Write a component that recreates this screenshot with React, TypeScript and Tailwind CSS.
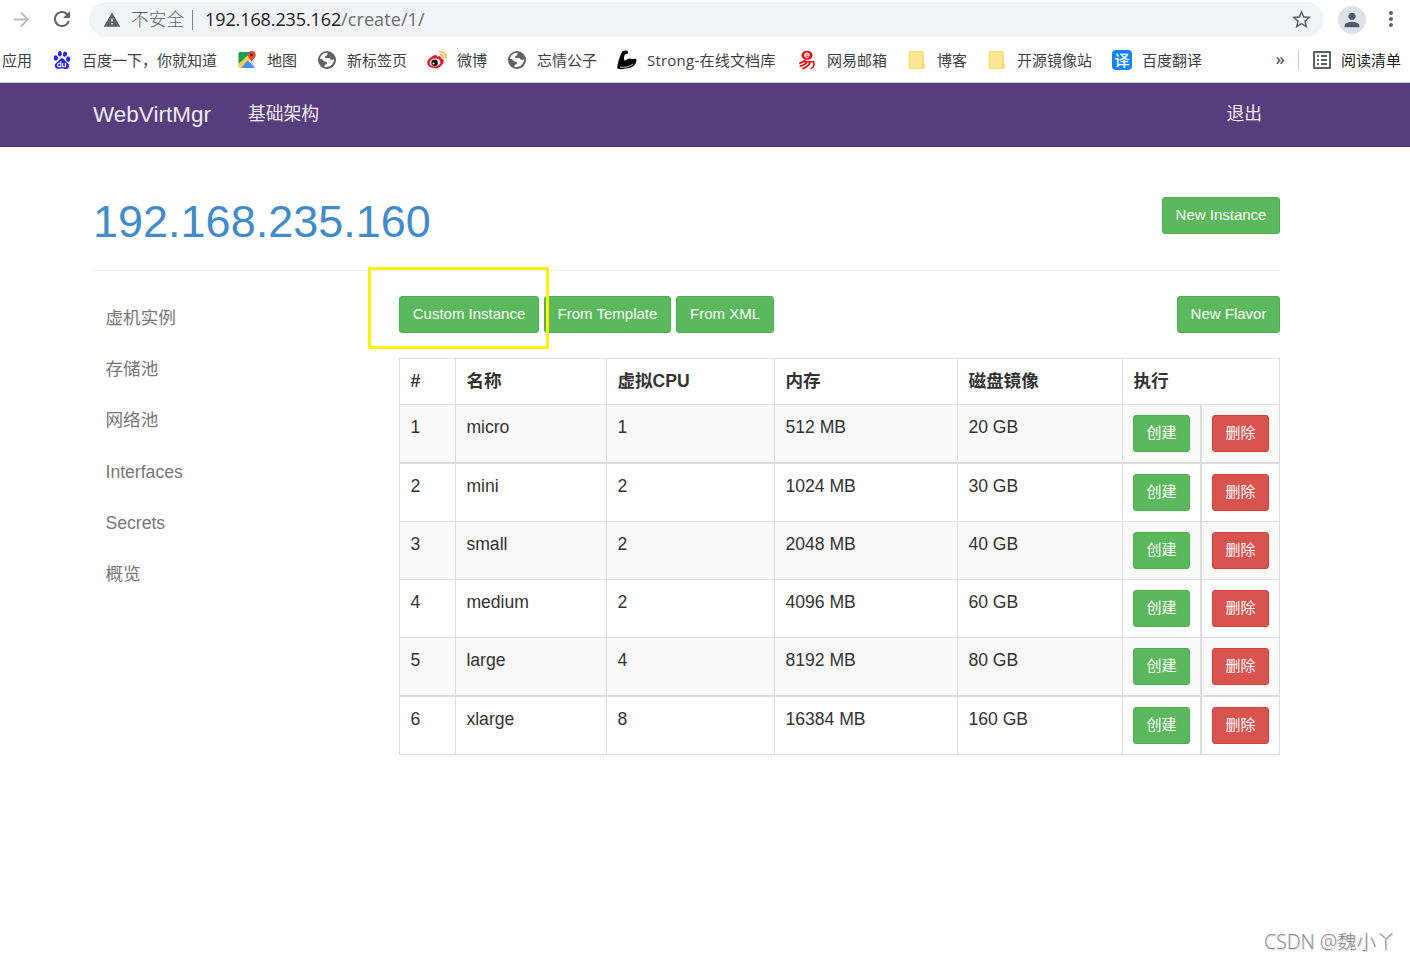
import React from "react";
import {
  MdArrowForward,
  MdRefresh,
  MdWarning,
  MdStarBorder,
  MdPerson,
  MdMoreVert,
  MdListAlt,
} from "react-icons/md";
import { SiBaidu } from "react-icons/si";

const MapIcon = () => (
  <svg viewBox="0 0 20 20" className="h-5 w-5">
    <rect x="1.5" y="2" width="16" height="16" rx="1.5" fill="#e8e8e8" />
    <path d="M3 2H14L3 14.500L1.500 13V3.500Q1.500 2 3 2Z" fill="#1a9f55" />
    <path d="M1.500 14L14.500 2H17.500V5L4 18H3L1.500 16.500Z" fill="#fbd04c" />
    <path d="M10.500 10.500L17.500 17V18H4Z" fill="#4b8df8" />
    <path d="M17.500 7V17L12 10.500Z" fill="#ddd" />
    <path d="M14.700 1a4 4 0 0 1 4 4c0 2.800-3.200 4-4 7.200C14 9 10.700 7.800 10.700 5a4 4 0 0 1 4-4Z" fill="#e2453a" />
    <circle cx="14.700" cy="4.800" r="1.400" fill="#76231d" />
  </svg>
);

const GlobeIcon = () => (
  <svg viewBox="0 0 20 20" className="h-5 w-5">
    <circle cx="10" cy="10" r="9" fill="#5f6368" />
    <path
      d="M10.800 2.800c-.8 1.100-.2 1.900-1 2.700-1.300.3-1.900 1.200-1.700 2.400h3.700c1.700 0 1.200 1.500 2.200 1.900 1.100.4 2.100-.2 3.100-.8.100 3.300-2.200 6.500-5.100 7.600-1.500.5-3.200.6-4.800.1.300-1 .7-1.900 1.500-2.200 1.100-.3 1.500-1 1.200-2-.5-1-1.500-.9-2.400-1.100-1.300-.4-1.300-1.800-2.400-2.200-.6-.2-1.400-.2-2.100-.1C3.100 5.600 6.600 2.500 10.800 2.800Z"
      fill="#fff"
    />
  </svg>
);

const WeiboIcon = () => (
  <svg viewBox="0 0 20 20" className="h-5 w-5">
    <path
      d="M7.500 5.300c1.500-.6 2.800-.2 2.500 1.500 1.800-.7 4.300-.8 4 1.400 1.800.5 3 1.600 2.800 3.300-.3 3-4.200 6.800-8.500 6.800-4.500 0-8.100-2.200-8.100-5.700 0-2.600 4.200-6.400 7.300-7.300Z"
      fill="#e6162d"
    />
    <ellipse cx="8" cy="12.500" rx="5.400" ry="4" fill="#fff" transform="rotate(-8 8 12.500)" />
    <circle cx="7.600" cy="12.700" r="3.300" fill="#17110e" />
    <circle cx="6.500" cy="13.600" r="1" fill="#fff" />
    <path d="M12.700 1.900c3.800-.7 7 2.200 6 6.300M13.200 4.800c2-.4 3.300.9 2.800 2.800" fill="none" stroke="#f9a21a" strokeWidth="1.300" strokeLinecap="round" />
  </svg>
);

const BicepIcon = () => (
  <svg viewBox="0 0 20 20" className="h-5 w-5">
    <path
      d="M5.500 1.300C7 .4 9 .4 10.300 1c.9.600 1 1.800.3 2.700L7.800 4.600 6.800 7.800l.9 3.300c1.500-1.500 3.500-2.500 5-2.500l2.300.5 4.300-.3c.5 2.500-.5 5.200-2.300 7-2.300 1.700-5.500 2.400-8.500 2.800-2.800.8-5.700.8-8 .2L.2 17.500c.3-2.500 1-6.500 2.300-9.500C3.500 5.500 4.200 2.800 5.500 1.300Z"
      fill="#050505"
    />
    <path d="M3 17.200c4.500.7 9.500-.4 13-3.200" fill="none" stroke="#fff" strokeWidth="0.800" />
  </svg>
);

const NeteaseIcon = () => (
  <svg viewBox="0 0 20 20" className="h-5 w-5">
    <ellipse cx="10" cy="5.200" rx="5.500" ry="4.500" fill="#f6050b" />
    <path d="M7.800 5.200h4.300c0-2.700-4.200-2.700-4.400.1 0 2.200 2.900 2.500 4.300 1.300" fill="none" stroke="#fff" strokeWidth="1.200" />
    <path
      d="M8.200 9.800C6.800 11.700 4.500 13 2.200 13.500M5.800 11.800H16.500C17.500 14.300 17 18.300 13.500 18.700M9.700 12.500C8 14.700 5 15.800 2.700 16.200M13.200 12.500C11.300 15.900 8 18 5.200 18.800"
      fill="none"
      stroke="#f6050b"
      strokeWidth="1.600"
    />
  </svg>
);

const FolderIcon = () => (
  <svg viewBox="0 0 20 20" className="h-5 w-5">
    <path d="M3 1.500H15Q16.200 1.500 16.200 2.700V13.200L17.300 14.200V17Q17.300 18.500 16 18.500H3Q2 18.500 2 17.500V2.500Q2 1.500 3 1.500Z" fill="#ffe594" stroke="#f5d672" />
    <path d="M16.200 13.200 14 14.500V18.300H16Q17.300 18.300 17.300 17V14.200Z" fill="#f5d672" />
  </svg>
);

const TranslateIcon = () => (
  <span className="flex h-5 w-5 items-center justify-center rounded-[4px] bg-[#1484f8] text-[15px] leading-5 font-medium text-white">译</span>
);

const bookmarks: { icon: React.ReactNode; label: string; width: string }[] = [
  { icon: <SiBaidu className="h-[18px] w-[18px] text-[#2529dc]" />, label: "百度一下，你就知道", width: "w-[135px]" },
  { icon: <MapIcon />, label: "地图", width: "w-[30px]" },
  { icon: <GlobeIcon />, label: "新标签页", width: "w-[60px]" },
  { icon: <WeiboIcon />, label: "微博", width: "w-[30px]" },
  { icon: <GlobeIcon />, label: "忘情公子", width: "w-[60px]" },
  { icon: <BicepIcon />, label: "Strong-在线文档库", width: "w-[130px] tracking-[0.220px]" },
  { icon: <NeteaseIcon />, label: "网易邮箱", width: "w-[60px]" },
  { icon: <FolderIcon />, label: "博客", width: "w-[30px]" },
  { icon: <FolderIcon />, label: "开源镜像站", width: "w-[75px]" },
  { icon: <TranslateIcon />, label: "百度翻译", width: "w-[60px]" },
];

const flavors = [
  { id: 1, name: "micro", cpu: 1, memory: "512 MB", disk: "20 GB", row: "h-[59px] border-b-2 bg-[#f9f9f9]" },
  { id: 2, name: "mini", cpu: 2, memory: "1024 MB", disk: "30 GB", row: "h-[58px] border-b" },
  { id: 3, name: "small", cpu: 2, memory: "2048 MB", disk: "40 GB", row: "h-[58px] border-b bg-[#f9f9f9]" },
  { id: 4, name: "medium", cpu: 2, memory: "4096 MB", disk: "60 GB", row: "h-[58px] border-b" },
  { id: 5, name: "large", cpu: 4, memory: "8192 MB", disk: "80 GB", row: "h-[59px] border-b-2 bg-[#f9f9f9]" },
  { id: 6, name: "xlarge", cpu: 8, memory: "16384 MB", disk: "160 GB", row: "h-[58px] border-b" },
];

const columns = "grid grid-cols-[56px_151px_168px_183px_165px_79px_78px]";
const cell = "border-r border-[#ddd] pl-[10.400px] pt-[10px]";

function Button({ children, color = "green", className = "" }: { children: React.ReactNode; color?: "green" | "red"; className?: string }) {
  const tone = color === "green" ? "bg-[#5cb85c] border-[#4cae4c]" : "bg-[#d9534f] border-[#d43f3a]";
  return (
    <button className={`flex h-[37px] items-center justify-center rounded-[3px] border pb-px text-[15px] leading-[22px] whitespace-nowrap text-white ${tone} ${className}`}>
      {children}
    </button>
  );
}

function BrowserChrome() {
  return (
    <header className="h-[83px] border-b border-[#d0d0d0] bg-white font-['Open_Sans','Noto_Sans_CJK_SC',sans-serif]">
      <div className="flex h-10 items-start">
        <MdArrowForward className="mt-[8px] ml-[10px] h-[23px] w-[23px] text-[#babcbe]" />
        <MdRefresh className="mt-[7px] ml-[17px] h-6 w-6 text-[#5f6368]" />
        <div className="mt-[2px] ml-[15px] flex h-[35px] w-[1235px] items-center rounded-full bg-[#f1f3f4] pl-[14px] whitespace-nowrap">
          <MdWarning className="h-[18px] w-[18px] text-[#5f6368]" />
          <span className="ml-[10px] w-[53px] text-[17.700px] font-light text-[#5f6368]">不安全</span>
          <span className="ml-[8px] h-[20px] w-px bg-[#85888b]" />
          <span className="ml-[12px] w-[136px] text-[18px] tracking-[-0.100px] text-[#202124]">192.168.235.162</span>
          <span className="text-[18px] tracking-[0.100px] text-[#6a6e73]">/create/1/</span>
          <MdStarBorder className="mr-[11px] ml-auto h-[23px] w-[23px] text-[#5f6368]" />
        </div>
        <div className="mt-[6px] ml-[14px] flex h-7 w-7 items-center justify-center rounded-full bg-[#dee1e6]">
          <MdPerson className="h-[22px] w-[22px] text-[#4f5b70]" />
        </div>
        <MdMoreVert className="mt-[7px] ml-[13px] h-6 w-6 text-[#5f6368]" />
      </div>
      <div className="flex h-10 items-center text-[15px] whitespace-nowrap text-[#3c4043]">
        <span className="w-8 pl-[2px]">应用</span>
        <div className="ml-5 flex gap-5">
          {bookmarks.map((b) => (
            <div key={b.label} className="flex items-center gap-[10px]">
              <span className="flex h-5 w-5 items-center justify-center">{b.icon}</span>
              <span className={b.width}>{b.label}</span>
            </div>
          ))}
        </div>
        <span className="mr-[13px] ml-auto pb-[3px] text-[17px] font-semibold text-[#5f6368]">»</span>
        <span className="h-[20px] w-px bg-[#c8cacc]" />
        <MdListAlt className="ml-[11px] h-6 w-6 text-[#5f6368]" />
        <span className="mr-[9px] ml-[7px] w-[60px] text-[#202124]">阅读清单</span>
      </div>
    </header>
  );
}

export default function App() {
  return (
    <div className="relative h-[961px] w-[1410px] overflow-hidden bg-white font-['Liberation_Sans','Noto_Sans_CJK_SC',sans-serif] text-[17.600px] leading-[25px] text-[#333]">
      <BrowserChrome />
      <nav className="flex h-16 items-center border-b border-[#463265] bg-[#563d7c] pr-[148px] pb-px pl-[93px] text-[#f0ebf7]">
        <span className="w-[155px] text-[22.500px]">WebVirtMgr</span>
        <span className="text-[17.800px]">基础架构</span>
        <span className="ml-auto text-[17.800px]">退出</span>
      </nav>

      <main className="ml-[93px] w-[1187px]">
        <div className="flex h-[124px] items-start justify-between border-b border-[#eee] pt-[50px]">
          <h1 className="text-[45px] leading-[50px] text-[#428bca]">192.168.235.160</h1>
          <Button className="w-[118px]">New Instance</Button>
        </div>
        <div className="flex">
          <aside className="flex w-[306px] flex-col pt-[22px] pl-[12.500px] text-[#777]">
            {["虚机实例", "存储池", "网络池", "Interfaces", "Secrets", "概览"].map((item) => (
              <a key={item} className="flex h-[51.200px] items-center">
                {item}
              </a>
            ))}
          </aside>
          <section className="w-[881px] pt-[25px]">
            <div className="flex gap-[5px]">
              <Button className="w-[140px]">Custom Instance</Button>
              <Button className="w-[127px]">From Template</Button>
              <Button className="w-[98px]">From XML</Button>
              <Button className="ml-auto w-[103px]">New Flavor</Button>
            </div>
            <div className="mt-[25px] border-t border-l border-[#ddd]">
              <div className={`${columns} h-[46px] border-b border-[#ddd] font-bold`}>
                <div className={cell}>#</div>
                <div className={cell}>名称</div>
                <div className={cell}>虚拟CPU</div>
                <div className={cell}>内存</div>
                <div className={cell}>磁盘镜像</div>
                <div className={`${cell} col-span-2`}>执行</div>
              </div>
              {flavors.map((f) => (
                <div key={f.id} className={`${columns} border-[#ddd] ${f.row}`}>
                  <div className={cell}>{f.id}</div>
                  <div className={cell}>{f.name}</div>
                  <div className={cell}>{f.cpu}</div>
                  <div className={cell}>{f.memory}</div>
                  <div className={cell}>{f.disk}</div>
                  <div className="border-r-2 border-[#ddd] pt-[10px] pl-[10px]">
                    <Button className="w-[57px]">创建</Button>
                  </div>
                  <div className="border-r border-[#ddd] pt-[10px] pl-[10px]">
                    <Button color="red" className="w-[57px]">删除</Button>
                  </div>
                </div>
              ))}
            </div>
          </section>
        </div>
      </main>

      <div className="absolute top-[267px] left-[368px] h-[82px] w-[181px] border-[3px] border-[#fff200]" />
      <div className="absolute top-[928px] left-[1264px] font-['Open_Sans','Noto_Sans_CJK_SC',sans-serif] text-[19.500px] leading-[27px] font-light whitespace-nowrap text-[#888] [text-shadow:1px_1px_0_#ddd]">
        CSDN @魏小丫
      </div>
    </div>
  );
}
